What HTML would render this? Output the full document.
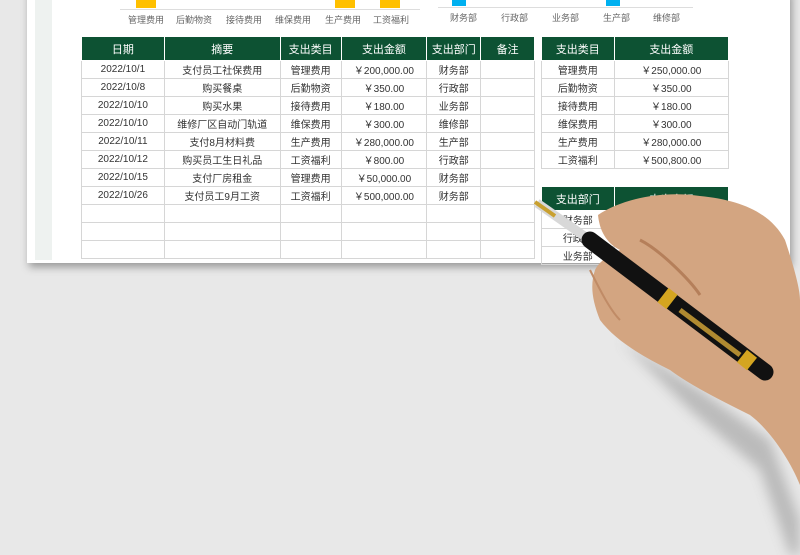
<!DOCTYPE html>
<html><head><meta charset="utf-8"><style>
body{margin:0;width:800px;height:555px;overflow:hidden;background:#e8e8e8;font-family:"Liberation Sans","Noto Sans CJK SC",sans-serif;position:relative}
.paper{position:absolute;left:27px;top:-10px;width:763px;height:273px;background:#fff;box-shadow:2px 4px 8px rgba(0,0,0,.35)}
.strip{position:absolute;left:35px;top:0;width:17px;height:260px;background:#eef2f0}
table{position:absolute;border-collapse:collapse;font-size:10px;color:#333}
td{border:1px solid #d6d6d6;height:17px;padding:0;text-align:center;white-space:nowrap}
th{background:#0d5233;color:#fff;font-weight:normal;height:21px;border:1px solid #fff;font-size:11px}
.ax{position:absolute;font-size:9px;color:#666}
.bar{position:absolute}
</style></head><body>
<div class="paper"></div>
<div class="strip"></div>
<div class="bar" style="left:136px;top:0;width:20px;height:8px;background:#ffc000"></div>
<div class="bar" style="left:335px;top:0;width:20px;height:8px;background:#ffc000"></div>
<div class="bar" style="left:380px;top:0;width:20px;height:8px;background:#ffc000"></div>
<div style="position:absolute;left:120px;top:9px;width:300px;border-top:1px solid #ddd"></div>
<div class="ax" style="left:128px;top:13px">管理费用</div><div class="ax" style="left:176px;top:13px">后勤物资</div><div class="ax" style="left:226px;top:13px">接待费用</div><div class="ax" style="left:275px;top:13px">维保费用</div><div class="ax" style="left:325px;top:13px">生产费用</div><div class="ax" style="left:373px;top:13px">工资福利</div>
<div class="bar" style="left:452px;top:0;width:14px;height:6px;background:#00b0f0"></div>
<div class="bar" style="left:606px;top:0;width:14px;height:6px;background:#00b0f0"></div>
<div style="position:absolute;left:438px;top:7px;width:255px;border-top:1px solid #ddd"></div>
<div class="ax" style="left:450px;top:11px">财务部</div><div class="ax" style="left:501px;top:11px">行政部</div><div class="ax" style="left:552px;top:11px">业务部</div><div class="ax" style="left:603px;top:11px">生产部</div><div class="ax" style="left:653px;top:11px">维修部</div>
<table style="left:81px;top:36px;width:454px">
<colgroup><col style="width:83px"><col style="width:116px"><col style="width:61px"><col style="width:86px"><col style="width:54px"><col style="width:54px"></colgroup>
<tr><th>日期</th><th>摘要</th><th>支出类目</th><th>支出金额</th><th>支出部门</th><th>备注</th></tr>
<tr><td>2022/10/1</td><td>支付员工社保费用</td><td>管理费用</td><td>￥200,000.00</td><td>财务部</td><td></td></tr>
<tr><td>2022/10/8</td><td>购买餐桌</td><td>后勤物资</td><td>￥350.00</td><td>行政部</td><td></td></tr>
<tr><td>2022/10/10</td><td>购买水果</td><td>接待费用</td><td>￥180.00</td><td>业务部</td><td></td></tr>
<tr><td>2022/10/10</td><td>维修厂区自动门轨道</td><td>维保费用</td><td>￥300.00</td><td>维修部</td><td></td></tr>
<tr><td>2022/10/11</td><td>支付8月材料费</td><td>生产费用</td><td>￥280,000.00</td><td>生产部</td><td></td></tr>
<tr><td>2022/10/12</td><td>购买员工生日礼品</td><td>工资福利</td><td>￥800.00</td><td>行政部</td><td></td></tr>
<tr><td>2022/10/15</td><td>支付厂房租金</td><td>管理费用</td><td>￥50,000.00</td><td>财务部</td><td></td></tr>
<tr><td>2022/10/26</td><td>支付员工9月工资</td><td>工资福利</td><td>￥500,000.00</td><td>财务部</td><td></td></tr>
<tr><td></td><td></td><td></td><td></td><td></td><td></td></tr>
<tr><td></td><td></td><td></td><td></td><td></td><td></td></tr>
<tr><td></td><td></td><td></td><td></td><td></td><td></td></tr>
</table>
<table style="left:541px;top:36px;width:188px">
<colgroup><col style="width:73px"><col style="width:115px"></colgroup>
<tr><th>支出类目</th><th>支出金额</th></tr>
<tr><td>管理费用</td><td>￥250,000.00</td></tr>
<tr><td>后勤物资</td><td>￥350.00</td></tr>
<tr><td>接待费用</td><td>￥180.00</td></tr>
<tr><td>维保费用</td><td>￥300.00</td></tr>
<tr><td>生产费用</td><td>￥280,000.00</td></tr>
<tr><td>工资福利</td><td>￥500,800.00</td></tr>
<tr><td style="border:none"></td><td style="border:none"></td></tr>
<tr><th>支出部门</th><th>支出金额</th></tr>
<tr><td>财务部</td><td></td></tr>
<tr><td>行政部</td><td></td></tr>
<tr><td>业务部</td><td></td></tr>
</table>
<svg style="position:absolute;left:0;top:0" width="800" height="555">
<defs><filter id="s"><feGaussianBlur stdDeviation="6"/></filter></defs>
<path d="M620,340 L700,390 L770,440 L800,520 L800,555 L790,555 L760,470 L690,410 Z" fill="#777" opacity=".4" filter="url(#s)"/>
<path d="M598,215 C620,200 660,190 700,196 C740,200 770,212 785,240 C795,270 800,290 800,300 L800,485 C790,460 770,430 750,415 C720,400 690,385 670,370 C640,355 615,340 600,320 C592,300 590,285 595,270 C600,260 610,255 620,250 C610,245 600,235 598,215 Z" fill="#d3a581"/>
<path d="M640,240 C660,250 690,280 700,295" stroke="#b57f5a" stroke-width="3" fill="none"/>
<path d="M590,270 C600,290 610,310 620,320" stroke="#c08b66" stroke-width="2" fill="none"/>
<line x1="537" y1="203" x2="590" y2="240" stroke="#d8d8d8" stroke-width="9"/>
<line x1="535" y1="202" x2="555" y2="216" stroke="#c9a030" stroke-width="4"/>
<line x1="590" y1="240" x2="765" y2="372" stroke="#111" stroke-width="17" stroke-linecap="round"/>
<line x1="663" y1="295" x2="672" y2="302" stroke="#d4a520" stroke-width="18"/>
<line x1="680" y1="310" x2="740" y2="355" stroke="#b08a30" stroke-width="5"/>
<line x1="742" y1="356" x2="752" y2="364" stroke="#d4a520" stroke-width="16"/>
</svg>
</body></html>
